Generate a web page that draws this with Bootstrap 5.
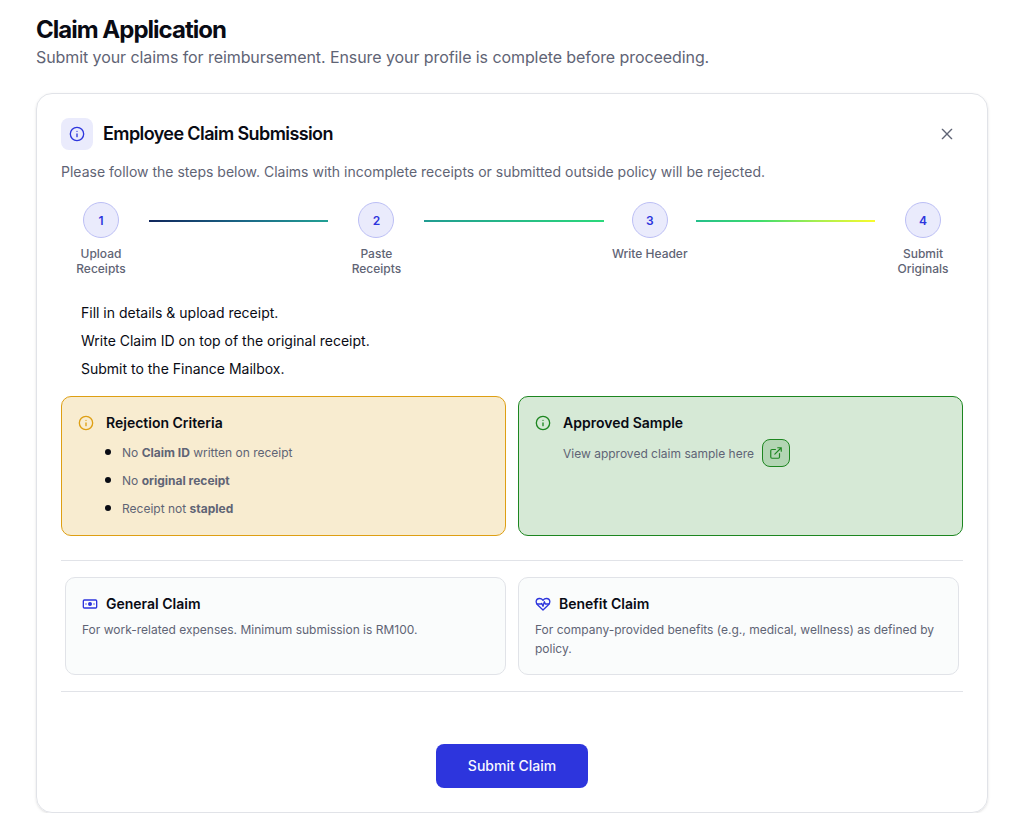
<!DOCTYPE html>
<html lang="en">
<head>
<meta charset="utf-8">
<meta name="viewport" content="width=device-width, initial-scale=1">
<title>Claim Application</title>
<link href="https://cdn.jsdelivr.net/npm/bootstrap@5.3.0/dist/css/bootstrap.min.css" rel="stylesheet">
<style>
  body { font-family: Inter, sans-serif; color: #090b14; background: #fff; font-size: 14px; line-height: 20px; overflow: hidden; }
  svg { display: block; flex: none; }
  .page { width: 952px; margin-left: 36px; padding-top: 14px; }
  .page-title { font-size: 24px; line-height: 32px; font-weight: 700; letter-spacing: -.99px; margin: 0; }
  .page-sub { font-size: 16px; line-height: 24px; letter-spacing: -.08px; color: #5f6475; margin: -1px 0 24px; }
  .claim-panel { border: 1px solid #e1e3e8; border-radius: 16px; padding: 24px; height: 720px; box-shadow: 0 1px 3px rgba(0,0,0,.1), 0 1px 2px -1px rgba(0,0,0,.1); }
  .tile { width: 32px; height: 32px; border-radius: 8px; background: #eaebfc; color: #2d35dd; }
  .panel-title { font-size: 18px; line-height: 28px; font-weight: 600; letter-spacing: -.6px; margin: 0 0 0 10px; }
  .dim { color: #5f6475; }
  .close-btn { width: 32px; height: 32px; color: #5f6475; border: 0; background: none; padding: 0; }
  .step { max-width: 80px; min-width: 75px; font-size: 12px; line-height: 15px; font-weight: 500; color: #5f6475; text-align: center; flex: none; }
  .step.two { width: 80px; padding: 0 12px; }
  .step-num { width: 36px; height: 36px; border: 1px solid #bcbff5; background: #eaebfc; color: #2d35dd; font-weight: 600; margin-bottom: 8px; }
  .bar { height: 2px; margin-top: 18px; }
  .bar-a { background: linear-gradient(90deg, #10265c, #1b6a88 55%, #22a094); }
  .bar-b { background: linear-gradient(90deg, #219c92, #2bd97b); }
  .bar-c { background: linear-gradient(90deg, #25bf8b, #3ddc6e 35%, #a5ee50 67%, #f9fb2d); }
  .notes { padding: 0 0 0 20px; margin: 27px 0 17px; display: grid; gap: 8px; list-style: none; }
  .pair { gap: 12px; }
  .notice { height: 140px; border: 1px solid; border-radius: 10px; padding: 16px; }
  .notice svg.lead-icon { margin-top: 2px; }
  .notice-warn { border-color: #de9f13; background: #f8ecd0; }
  .notice-warn .lead-icon { color: #de9f13; }
  .notice-ok { border-color: #1d8620; background: #d6e9d6; }
  .notice-ok .lead-icon { color: #1d8620; }
  .notice h3, .kind h3 { font-size: 14px; line-height: 20px; font-weight: 600; margin: 0; }
  .fine { font-size: 12px; line-height: 20px; color: #5f6475; }
  .fine b { font-weight: 700; }
  .crit { padding: 0; margin: 10px 0 0 -1px; list-style: none; display: grid; gap: 8px; }
  .crit li { display: flex; }
  .crit li::before { content: ""; width: 6px; height: 6px; border-radius: 50%; background: #090b14; margin: 6px 11px 0 0; }
  .sample { margin-top: 6px; }
  .sample-text { padding-top: 2px; }
  .link-btn { width: 28px; height: 28px; border: 1px solid #1d8620; border-radius: 8px; background: #b3d5b4; color: #1d8620; }
  .kinds { border: solid #e1e3e8; border-width: 1px 0; margin-top: 24px; padding: 16px 4px; }
  .kind { height: 98px; border: 1px solid #e1e3e8; border-radius: 10px; background: #fafcfc; padding: 16px; }
  .kind p { font-size: 12px; line-height: 19px; color: #5f6475; margin: 6px 0 0; }
  .submit { width: 152px; height: 44px; border-radius: 8px; background: #2d35dd; color: #f7f8ff; font-size: 14px; line-height: 20px; font-weight: 500; margin-top: 52px; padding: 0; border: 0; }
</style>
</head>
<body>
<svg width="0" height="0" class="d-none">
  <symbol id="info" viewBox="0 0 24 24" fill="none" stroke="currentColor" stroke-width="2" stroke-linecap="round" stroke-linejoin="round"><circle cx="12" cy="12" r="10"/><path d="M12 16v-4M12 8h.01"/></symbol>
</svg>
<main class="page">
  <h1 class="page-title">Claim Application</h1>
  <p class="page-sub">Submit your claims for reimbursement. Ensure your profile is complete before proceeding.</p>

  <section class="claim-panel">
    <div class="d-flex align-items-center">
      <div class="tile d-flex align-items-center justify-content-center"><svg width="16" height="16"><use href="#info"/></svg></div>
      <h2 class="panel-title">Employee Claim Submission</h2>
      <button class="close-btn ms-auto d-flex align-items-center justify-content-center" aria-label="Close">
        <svg width="16" height="16" viewBox="0 0 24 24" fill="none" stroke="currentColor" stroke-width="2" stroke-linecap="round"><path d="M19 5 5 19M5 5l14 14"/></svg>
      </button>
    </div>
    <p class="dim mb-0 mt-2 pt-1">Please follow the steps below. Claims with incomplete receipts or submitted outside policy will be rejected.</p>

    <div class="d-flex gap-2 mt-3 pt-1">
      <div class="step two d-flex flex-column align-items-center"><span class="step-num rounded-circle d-flex align-items-center justify-content-center">1</span>Upload Receipts</div>
      <div class="bar bar-a flex-fill"></div>
      <div class="step two d-flex flex-column align-items-center"><span class="step-num rounded-circle d-flex align-items-center justify-content-center">2</span>Paste Receipts</div>
      <div class="bar bar-b flex-fill"></div>
      <div class="step d-flex flex-column align-items-center"><span class="step-num rounded-circle d-flex align-items-center justify-content-center">3</span>Write Header</div>
      <div class="bar bar-c flex-fill"></div>
      <div class="step two d-flex flex-column align-items-center"><span class="step-num rounded-circle d-flex align-items-center justify-content-center">4</span>Submit Originals</div>
    </div>

    <ul class="notes">
      <li>Fill in details &amp; upload receipt.</li>
      <li>Write Claim ID on top of the original receipt.</li>
      <li>Submit to the Finance Mailbox.</li>
    </ul>

    <div class="pair d-flex">
      <div class="notice notice-warn w-50 d-flex">
        <svg class="lead-icon" width="16" height="16"><use href="#info"/></svg>
        <div class="ms-2 ps-1">
          <h3>Rejection Criteria</h3>
          <ul class="crit fine">
            <li><span>No <b>Claim ID</b> written on receipt</span></li>
            <li><span>No <b>original receipt</b></span></li>
            <li><span>Receipt not <b>stapled</b></span></li>
          </ul>
        </div>
      </div>
      <div class="notice notice-ok w-50 d-flex">
        <svg class="lead-icon" width="16" height="16"><use href="#info"/></svg>
        <div class="ms-2 ps-1">
          <h3>Approved Sample</h3>
          <div class="sample d-flex align-items-center gap-2 fine">
            <span class="sample-text">View approved claim sample here</span>
            <span class="link-btn d-flex align-items-center justify-content-center"><svg width="14" height="14" viewBox="0 0 24 24" fill="none" stroke="currentColor" stroke-width="2" stroke-linecap="round" stroke-linejoin="round"><path d="M15 3h6v6M10 14 21 3M18 13v6a2 2 0 0 1-2 2H5a2 2 0 0 1-2-2V8a2 2 0 0 1 2-2h6"/></svg></span>
          </div>
        </div>
      </div>
    </div>

    <div class="kinds pair d-flex">
      <div class="kind w-50">
        <div class="d-flex align-items-center gap-2">
          <svg width="16" height="16" viewBox="0 0 24 24" fill="none" stroke="#2d35dd" stroke-width="2" stroke-linecap="round" stroke-linejoin="round"><rect x="2" y="6" width="20" height="12" rx="1.500"/><circle cx="12" cy="12" r="2" fill="#2d35dd"/><path d="M6 12h.01M18 12h.01"/></svg>
          <h3>General Claim</h3>
        </div>
        <p>For work-related expenses. Minimum submission is RM100.</p>
      </div>
      <div class="kind w-50">
        <div class="d-flex align-items-center gap-2">
          <svg width="16" height="16" viewBox="0 0 24 24" fill="none" stroke="#2d35dd" stroke-width="2" stroke-linecap="round" stroke-linejoin="round"><path d="M19.500 14c1.500-1.500 2.800-3 2.800-5.200A5.200 5.200 0 0 0 17 3.800c-2 0-3.600.9-5 2.500-1.400-1.600-3-2.500-5-2.500a5.200 5.200 0 0 0-5.300 5c0 2.200 1.300 3.700 2.800 5.200l7.500 7Z"/><path d="M2.800 12H9.500l.5-1 2 4.500 2-7 1.500 3.500h5.700"/></svg>
          <h3>Benefit Claim</h3>
        </div>
        <p>For company-provided benefits (e.g., medical, wellness) as defined by policy.</p>
      </div>
    </div>

    <button class="submit btn d-block mx-auto">Submit Claim</button>
  </section>
</main>
<script src="https://cdn.jsdelivr.net/npm/bootstrap@5.3.0/dist/js/bootstrap.bundle.min.js"></script>
</body>
</html>
